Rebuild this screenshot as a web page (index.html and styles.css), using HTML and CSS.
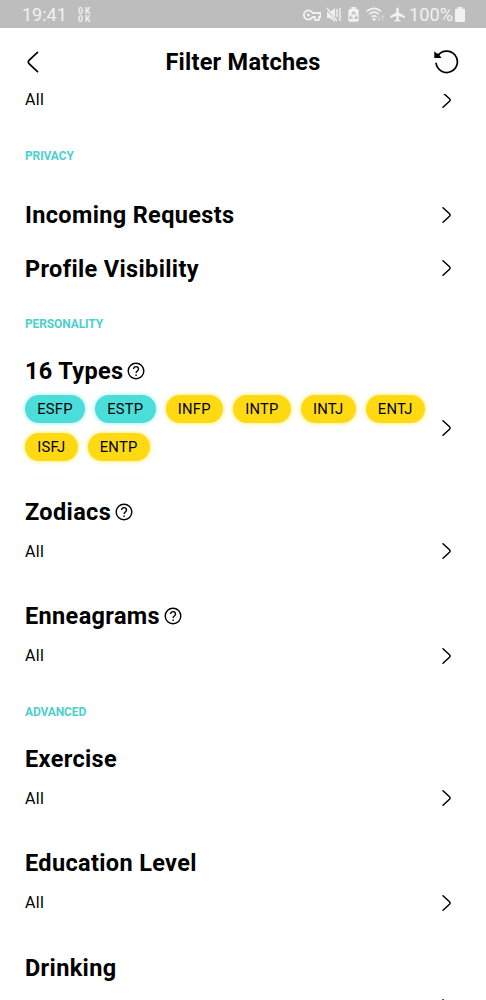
FILE: index.html
```html
<!DOCTYPE html>
<html lang="en">
<head>
<meta charset="utf-8">
<title>Filter Matches</title>
<link rel="stylesheet" href="styles.css">
</head>
<body>
<svg width="0" height="0" class="defs" aria-hidden="true">
  <symbol id="chevron" viewBox="0 0 12 18"><path d="M2 1.800 8.500 7.700Q9.800 9 8.500 10.300L2 16.200"/></symbol>
  <symbol id="help" viewBox="0 0 18 18"><circle cx="9" cy="9" r="7.800"/><path d="M6.600 7.100C6.600 3.800 11.500 3.900 11.500 7.100C11.500 9 9.100 9 9.100 11"/><path d="M9.100 12.400v1.600"/></symbol>
</svg>
<div class="screen">
  <div class="status">
    <span class="clock">19:41</span>
    <span class="speed"><span>0 K</span><span>0 K</span></span>
    <div class="indicators">
      <svg class="key" width="18" height="12" viewBox="0 0 18 12"><path d="M9.600 4A4.600 4.600 0 1 0 9.600 8H12v3h4V8h1.500V4Z" fill="none" stroke="#f1f1f1" stroke-width="1.800" stroke-linejoin="round"/><circle cx="5.300" cy="6" r="1.500" fill="#f1f1f1"/></svg>
      <svg class="mute" width="16" height="16" viewBox="0 0 16 16"><path d="M1 5h3l5-4v14l-5-4H1z" fill="#f1f1f1"/><path d="M0 1l11 13" stroke="#bdbdbd" stroke-width="2.400"/><path d="M1 1l10 13" stroke="#f1f1f1" stroke-width="1.300"/><path d="M11.500 2l-1 2 1 2-1 2 1 2M14.500 1l-1 2 1 2.200-1 2.300 1 2.300-1 2.200 1 2" fill="none" stroke="#f1f1f1" stroke-width="1.400"/></svg>
      <svg class="saver" width="11" height="15" viewBox="0 0 11 15"><path d="M3.200 0h4.600v2H9.500Q10.700 2 10.700 3.200v10.400Q10.700 14.700 9.500 14.700h-8Q.4 14.700.4 13.600V3.200Q.4 2 1.600 2h1.600z" fill="#f1f1f1"/><path d="M3.800 7.400 5.500 5l1.800 2.400M8 8.800l1 2.300H6.400M4.600 11.100H2l1-2.300" fill="none" stroke="#b4b4b4" stroke-width="1.200"/></svg>
      <svg class="wifi" width="20" height="15" viewBox="0 0 20 15"><path d="M.8 4.400Q8 -1.800 15.200 4.400M3.100 7.200Q8 3.200 12.900 7.200M5.400 9.900Q8 7.900 10.600 9.900" fill="none" stroke="#f1f1f1" stroke-width="1.600"/><circle cx="8" cy="12.200" r="1.500" fill="#f1f1f1"/><path d="M12.800 8.500v5M11.200 11.800l1.600 1.800 1.600-1.800M16.700 13.800v-5M15.100 10.400l1.600-1.800 1.600 1.800" fill="none" stroke="#d4d4d4" stroke-width="1.100"/></svg>
      <svg class="plane" width="15" height="15" viewBox="0 0 15 15"><path d="M6.300 1.300Q7.500-.5 8.700 1.300V5.500L15 9.300V11L8.700 9V12.400L10.500 13.800V15L7.500 14.100 4.500 15V13.800L6.300 12.400V9L0 11V9.300L6.300 5.500Z" fill="#f1f1f1"/></svg>
      <span class="percent">100%</span>
      <svg class="battery" width="10" height="15" viewBox="0 0 10 15"><path d="M2.500 0h5v1.800H9q1 0 1 1V14q0 1-1 1H1q-1 0-1-1V2.800q0-1 1-1h1.500z" fill="#f1f1f1"/></svg>
    </div>
  </div>
  <header class="header">
    <svg class="back" width="12" height="22" viewBox="0 0 12 22"><path d="M10.500 1.300 2 9.300Q.6 11 2 12.700L10.500 20.700"/></svg>
    <h1>Filter Matches</h1>
    <svg class="reset" width="26" height="26" viewBox="0 0 26 26"><path d="M5 6.500A10.700 10.700 0 1 1 3.100 14.400" fill="none" stroke="#000" stroke-width="1.700" stroke-linecap="round"/><path d="M1.300 2.200 3.800 4.600 5.200 4.600 8.600 8.900H1.300z"/></svg>
  </header>
  <main class="list">
    <div class="value first"><span>All</span><svg class="chev"><use href="#chevron"/></svg></div>

    <h2 class="label">PRIVACY</h2>
    <div class="links">
      <div class="link"><h3>Incoming Requests</h3><svg class="chev"><use href="#chevron"/></svg></div>
      <div class="link"><h3>Profile Visibility</h3><svg class="chev"><use href="#chevron"/></svg></div>
    </div>

    <h2 class="label">PERSONALITY</h2>
    <section class="item types">
      <div class="heading"><h3>16 Types</h3><svg class="help"><use href="#help"/></svg></div>
      <div class="picker">
        <div class="chips">
          <span class="chip teal">ESFP</span><span class="chip teal">ESTP</span><span class="chip">INFP</span><span class="chip">INTP</span><span class="chip">INTJ</span><span class="chip">ENTJ</span><span class="chip">ISFJ</span><span class="chip">ENTP</span>
        </div>
        <svg class="chev"><use href="#chevron"/></svg>
      </div>
    </section>
    <section class="item">
      <div class="heading"><h3>Zodiacs</h3><svg class="help"><use href="#help"/></svg></div>
      <div class="value"><span>All</span><svg class="chev"><use href="#chevron"/></svg></div>
    </section>
    <section class="item">
      <div class="heading"><h3>Enneagrams</h3><svg class="help"><use href="#help"/></svg></div>
      <div class="value"><span>All</span><svg class="chev"><use href="#chevron"/></svg></div>
    </section>

    <h2 class="label advanced">ADVANCED</h2>
    <section class="item">
      <div class="heading"><h3>Exercise</h3></div>
      <div class="value"><span>All</span><svg class="chev"><use href="#chevron"/></svg></div>
    </section>
    <section class="item">
      <div class="heading"><h3>Education Level</h3></div>
      <div class="value"><span>All</span><svg class="chev"><use href="#chevron"/></svg></div>
    </section>
    <section class="item">
      <div class="heading"><h3>Drinking</h3></div>
      <div class="value"><span></span><svg class="chev"><use href="#chevron"/></svg></div>
    </section>
  </main>
</div>
</body>
</html>
```
FILE: styles.css
```css
* { box-sizing: border-box; }
body { margin: 0; background: #fff; color: #000; font-family: Roboto, sans-serif; }
h1, h2, h3 { margin: 0; font-weight: 700; }
svg { display: block; flex: none; }
.defs { display: none; }
.screen { height: 1000px; overflow: hidden; display: flex; flex-direction: column; }

.status { flex: none; height: 28px; background: #bdbdbd; color: #f1f1f1; display: flex; align-items: center; padding: 1px 21px 0 22px; }
.clock { font-size: 18px; line-height: 26px; width: 56px; }
.speed { display: flex; flex-direction: column; font-size: 8.500px; line-height: 8px; font-weight: 700; }
.indicators { margin-left: auto; display: flex; align-items: center; }
.mute { margin-left: 5px; }
.saver { margin-left: 6px; }
.wifi { margin-left: 7px; }
.plane { margin-left: 4px; }
.percent { margin-left: 4px; font-size: 18.200px; line-height: 26px; }
.battery { margin-left: 2px; }

.header { flex: none; height: 64px; display: flex; align-items: center; justify-content: space-between; padding: 3px 27px 0 27px; }
.header h1 { font-size: 23.500px; line-height: 30px; letter-spacing: 0.250px; margin-left: 14px; }
.back { fill: none; stroke: #000; stroke-width: 1.700; stroke-linecap: round; }

.list { flex: 1; min-height: 0; overflow: hidden; padding: 0 33px 0 25px; }
.chev { width: 12px; height: 18px; fill: none; stroke: #000; stroke-width: 1.500; stroke-linecap: round; }
.help { width: 18px; height: 18px; fill: none; stroke: #000; stroke-width: 1.400; }
.value { height: 24px; display: flex; align-items: center; justify-content: space-between; font-size: 16px; letter-spacing: 0.300px; }
/* Scrolled partly under the header */
.value.first { height: 16px; line-height: 16px; }
.first .chev { clip-path: inset(3px 0 0 0); }
.label { margin-top: 38px; color: #4dd0cb; font-size: 12px; line-height: 20px; letter-spacing: -0.120px; }
.links { margin: 22px 0 -7px; }
.link + .link { margin-top: -0.500px; }
.link { height: 54px; display: flex; align-items: center; justify-content: space-between; }
.link .chev { margin-top: -1px; }
.links + .label { margin-top: 25.500px; }
h3 { font-size: 23.500px; line-height: 30px; letter-spacing: 0.350px; white-space: nowrap; }
.heading { height: 30px; display: flex; align-items: center; gap: 4px; }
.item { height: 104.500px; }
.label + .item { margin-top: 21.500px; }
.item .value { margin-top: 12.500px; }
.types { height: 141px; }
.label.advanced { margin-top: -3.500px; }
.picker { display: flex; align-items: center; justify-content: space-between; margin-top: 9px; }
.chips { flex: none; width: 405px; display: flex; flex-wrap: wrap; gap: 10px; }
.picker .chev { margin-left: -20px; }
.chip { height: 28px; padding: 0 12.200px; border-radius: 14px; background: #ffda13; box-shadow: 0 0 5px #ffe85a; font-size: 14.800px; line-height: 28px; letter-spacing: 0.220px; }
.teal { background: #4addda; box-shadow: 0 0 5px #96f1ec; }
```
